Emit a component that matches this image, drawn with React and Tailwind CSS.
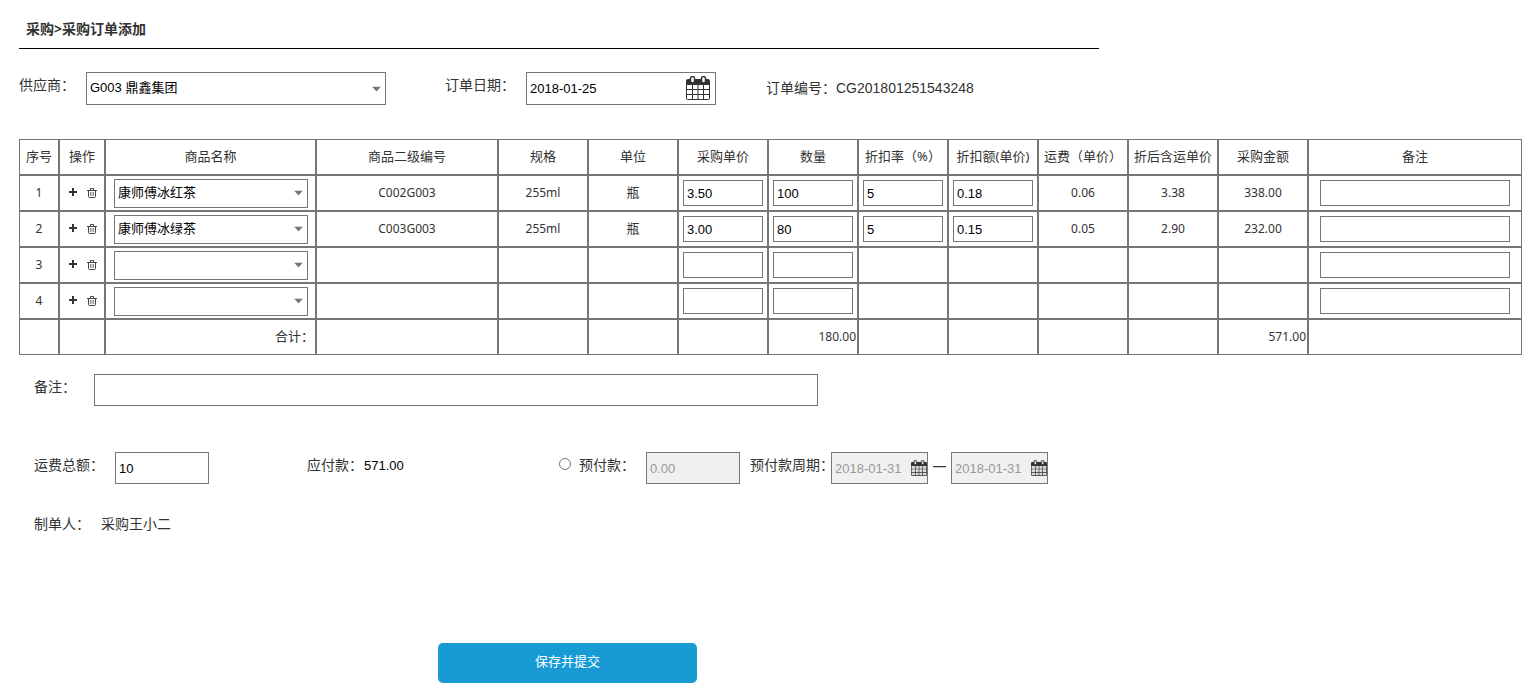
import { useState } from 'react'

const columns = [
  { title: '序号', width: 'w-[40px]' },
  { title: '操作', width: 'w-[46px]' },
  { title: '商品名称', width: 'w-[211px]' },
  { title: '商品二级编号', width: 'w-[182px]' },
  { title: '规格', width: 'w-[90px]' },
  { title: '单位', width: 'w-[90px]' },
  { title: '采购单价', width: 'w-[90px]' },
  { title: '数量', width: 'w-[90px]' },
  { title: '折扣率（%）', width: 'w-[90px]' },
  { title: '折扣额(单价)', width: 'w-[90px]' },
  { title: '运费（单价）', width: 'w-[90px]' },
  { title: '折后含运单价', width: 'w-[90px]' },
  { title: '采购金额', width: 'w-[90px]' },
  { title: '备注', width: '' },
]

const products = ['康师傅冰红茶', '康师傅冰绿茶']

const initialRows = [
  {
    name: '康师傅冰红茶', code: 'C002G003', spec: '255ml', unit: '瓶',
    price: '3.50', count: '100', rate: '5', discount: '0.18',
    freight: '0.06', finalPrice: '3.38', amount: '338.00', remark: '',
  },
  {
    name: '康师傅冰绿茶', code: 'C003G003', spec: '255ml', unit: '瓶',
    price: '3.00', count: '80', rate: '5', discount: '0.15',
    freight: '0.05', finalPrice: '2.90', amount: '232.00', remark: '',
  },
  { name: '', price: '', count: '', remark: '' },
  { name: '', price: '', count: '', remark: '' },
]

const sans = "font-['Noto_Sans','Noto_Sans_CJK_SC',sans-serif]"
const field = "block border border-[#767676] bg-white text-[13px] text-black outline-none font-['Liberation_Sans','Noto_Sans_CJK_SC',sans-serif]"
const disabledField = 'disabled:bg-[#f0f0f0] disabled:text-[#999]'

function CalendarIcon({ className, paper = '#fff' }) {
  return (
    <svg viewBox="0 0 24 24" className={className} aria-hidden="true">
      <path fill="#333" d="M2 3h20a2 2 0 0 1 2 2v17a2 2 0 0 1-2 2H2a2 2 0 0 1-2-2V5a2 2 0 0 1 2-2z" />
      <path
        fill={paper}
        d="M1 9h5v4H1zM7 9h4.500v4H7zM12.500 9h4.500v4h-4.500zM18 9h5v4h-5zM1 14h5v4H1zM7 14h4.500v4H7zM12.500 14h4.500v4h-4.500zM18 14h5v4h-5zM1 19h5v4H1zM7 19h4.500v4H7zM12.500 19h4.500v4h-4.500zM18 19h5v4h-5z"
      />
      <rect x="4.500" y="0.500" width="4" height="6.500" rx="2" fill={paper} stroke="#333" strokeWidth="1.500" />
      <rect x="15.500" y="0.500" width="4" height="6.500" rx="2" fill={paper} stroke="#333" strokeWidth="1.500" />
    </svg>
  )
}

function PlusIcon() {
  return (
    <svg viewBox="0 0 8 8" className="h-2 w-2" aria-hidden="true">
      <path fill="#333" d="M3 0h2v3h3v2H5v3H3V5H0V3h3z" />
    </svg>
  )
}

function TrashIcon() {
  return (
    <svg viewBox="0 0 10 10" className="h-2.5 w-2.5" fill="none" stroke="#444" aria-hidden="true">
      <path d="M0 2.500h10M3.500 2V.500h3V2M1.500 2.500v6a1 1 0 0 0 1 1h5a1 1 0 0 0 1-1v-6" />
      <path strokeWidth="0.600" d="M3.500 4v4M5 4v4M6.500 4v4" />
    </svg>
  )
}

function Select({ className, children, ...props }) {
  return (
    <div className="relative">
      <select {...props} className={`${field} ${className} w-full appearance-none px-[3px]`}>
        {children}
      </select>
      <svg viewBox="0 0 9 5" className="pointer-events-none absolute top-1/2 right-[5px] h-[5px] w-[9px] -translate-y-1/2" aria-hidden="true">
        <path fill="#767676" d="M0 0h9L4.500 5z" />
      </svg>
    </div>
  )
}

function CellInput({ wide, ...props }) {
  return <input type="text" {...props} className={`${field} mx-auto h-[26px] px-[3px] ${wide ? 'w-[190px]' : 'w-20'}`} />
}

function Cell({ children, className = 'text-center' }) {
  return <td className={`h-9 border border-[#767676] py-0 ${className}`}>{children}</td>
}

export default function App() {
  const [rows, setRows] = useState(initialRows)
  const [supplier, setSupplier] = useState('G003')
  const [date, setDate] = useState('2018-01-25')
  const [remark, setRemark] = useState('')
  const [freight, setFreight] = useState('10')
  const [prepay, setPrepay] = useState(false)

  function update(index, key, value) {
    setRows(rows.map((row, i) => (i === index ? { ...row, [key]: value } : row)))
  }

  function addRow(index) {
    const next = [...rows]
    next.splice(index + 1, 0, { name: '', price: '', count: '', remark: '' })
    setRows(next)
  }

  function removeRow(index) {
    setRows(rows.filter((_, i) => i !== index))
  }

  return (
    <form className={`${sans} pl-[19px] text-sm text-[#333]`} onSubmit={(e) => e.preventDefault()}>
      <h1 className="h-[49px] max-w-[1080px] border-b border-black pt-[19px] pl-[7px] text-sm font-bold">
        采购&gt;采购订单添加
      </h1>

      <div className="mt-[23px] flex items-start">
        <label htmlFor="supplier" className="w-[67px] leading-[26px]">供应商：</label>
        <div className="w-[300px]">
          <Select id="supplier" className="h-[33px]" value={supplier} onChange={(e) => setSupplier(e.target.value)}>
            <option value="G003">G003 鼎鑫集团</option>
          </Select>
        </div>
        <label htmlFor="date" className="ml-[59px] w-[81px] leading-[26px]">订单日期：</label>
        <div className="relative w-[190px]">
          <input
            id="date"
            type="text"
            value={date}
            onChange={(e) => setDate(e.target.value)}
            className={`${field} h-[33px] w-full px-[3px]`}
          />
          <CalendarIcon className="pointer-events-none absolute top-1 right-1.5 h-6 w-6" />
        </div>
        <p className="ml-[50px] leading-8">
          订单编号：<span className="font-['Liberation_Sans',sans-serif]">CG201801251543248</span>
        </p>
      </div>

      <table className="mt-[34px] w-full table-fixed border-separate border-spacing-0 text-xs">
        <thead>
          <tr>
            {columns.map((col) => (
              <th key={col.title} className={`${col.width} h-9 border border-[#767676] p-0 text-[13px] font-normal whitespace-nowrap`}>
                {col.title}
              </th>
            ))}
          </tr>
        </thead>
        <tbody>
          {rows.map((row, i) => (
            <tr key={i}>
              <Cell>{i + 1}</Cell>
              <Cell className="pl-0.5">
                <div className="flex items-start justify-center gap-2.5">
                  <button type="button" aria-label="添加" onClick={() => addRow(i)}><PlusIcon /></button>
                  <button type="button" aria-label="删除" onClick={() => removeRow(i)}><TrashIcon /></button>
                </div>
              </Cell>
              <Cell className="pr-[7px] pl-2">
                <Select className="h-[29px]" aria-label="商品名称" value={row.name} onChange={(e) => update(i, 'name', e.target.value)}>
                  <option value=""></option>
                  {products.map((p) => <option key={p} value={p}>{p}</option>)}
                </Select>
              </Cell>
              <Cell>{row.code}</Cell>
              <Cell>{row.spec}</Cell>
              <Cell className="text-center text-[13px]">{row.unit}</Cell>
              <Cell><CellInput aria-label="采购单价" value={row.price} onChange={(e) => update(i, 'price', e.target.value)} /></Cell>
              <Cell><CellInput aria-label="数量" value={row.count} onChange={(e) => update(i, 'count', e.target.value)} /></Cell>
              <Cell>
                {row.rate && <CellInput aria-label="折扣率" value={row.rate} onChange={(e) => update(i, 'rate', e.target.value)} />}
              </Cell>
              <Cell>
                {row.discount && <CellInput aria-label="折扣额" value={row.discount} onChange={(e) => update(i, 'discount', e.target.value)} />}
              </Cell>
              <Cell>{row.freight}</Cell>
              <Cell>{row.finalPrice}</Cell>
              <Cell>{row.amount}</Cell>
              <Cell><CellInput wide aria-label="备注" value={row.remark} onChange={(e) => update(i, 'remark', e.target.value)} /></Cell>
            </tr>
          ))}
          <tr>
            <Cell />
            <Cell />
            <Cell className="pr-px text-right text-[13px]">合计：</Cell>
            <Cell />
            <Cell />
            <Cell />
            <Cell />
            <Cell className="pr-px text-right">180.00</Cell>
            <Cell />
            <Cell />
            <Cell />
            <Cell />
            <Cell className="pr-px text-right">571.00</Cell>
            <Cell />
          </tr>
        </tbody>
      </table>

      <div className="mt-[19px] flex items-start pl-[15px]">
        <label htmlFor="remark" className="w-[60px] leading-[26px]">备注：</label>
        <input
          id="remark"
          type="text"
          value={remark}
          onChange={(e) => setRemark(e.target.value)}
          className={`${field} h-8 w-[724px] px-[3px]`}
        />
      </div>

      <div className="mt-[46px] flex items-start pl-[15px]">
        <label htmlFor="freight" className="w-[81px] leading-[26px]">运费总额：</label>
        <input
          id="freight"
          type="text"
          value={freight}
          onChange={(e) => setFreight(e.target.value)}
          className={`${field} h-8 w-[94px] px-[3px]`}
        />
        <span className="ml-[98px] w-[57px] leading-[26px]">应付款：</span>
        <span className="w-[195px] font-['Liberation_Sans',sans-serif] text-[13px] leading-7 text-black">571.00</span>
        <input
          id="prepay"
          type="radio"
          checked={prepay}
          onChange={() => setPrepay(true)}
          className="mt-1.5 mr-2 h-3 w-3 appearance-none rounded-full border border-[#767676] bg-white checked:border-4"
        />
        <label htmlFor="prepay" className="w-[67px] leading-[26px]">预付款：</label>
        <input type="text" aria-label="预付款" disabled={!prepay} defaultValue="0.00" className={`${field} ${disabledField} h-8 w-[94px] px-[3px]`} />
        <label htmlFor="start" className="ml-2.5 w-[81px] leading-[26px] whitespace-nowrap">预付款周期：</label>
        <div className="relative w-[97px]">
          <input id="start" type="text" disabled={!prepay} defaultValue="2018-01-31" className={`${field} ${disabledField} h-8 w-full px-[3px]`} />
          <CalendarIcon paper="#ddd" className="pointer-events-none absolute top-2 right-px h-4 w-4" />
        </div>
        <span className="w-[23px] text-center leading-7">—</span>
        <div className="relative w-[97px]">
          <input type="text" aria-label="结束日期" disabled={!prepay} defaultValue="2018-01-31" className={`${field} ${disabledField} h-8 w-full px-[3px]`} />
          <CalendarIcon paper="#ddd" className="pointer-events-none absolute top-2 right-px h-4 w-4" />
        </div>
      </div>

      <div className="mt-[26px] flex pl-[15px] leading-7">
        <span className="w-[67px]">制单人：</span>
        <span>采购王小二</span>
      </div>

      <button type="submit" className="mt-[105px] ml-[419px] block h-10 w-[259px] rounded-[5px] bg-[#189bd5] pb-1 text-[13px] text-white">
        保存并提交
      </button>
    </form>
  )
}
